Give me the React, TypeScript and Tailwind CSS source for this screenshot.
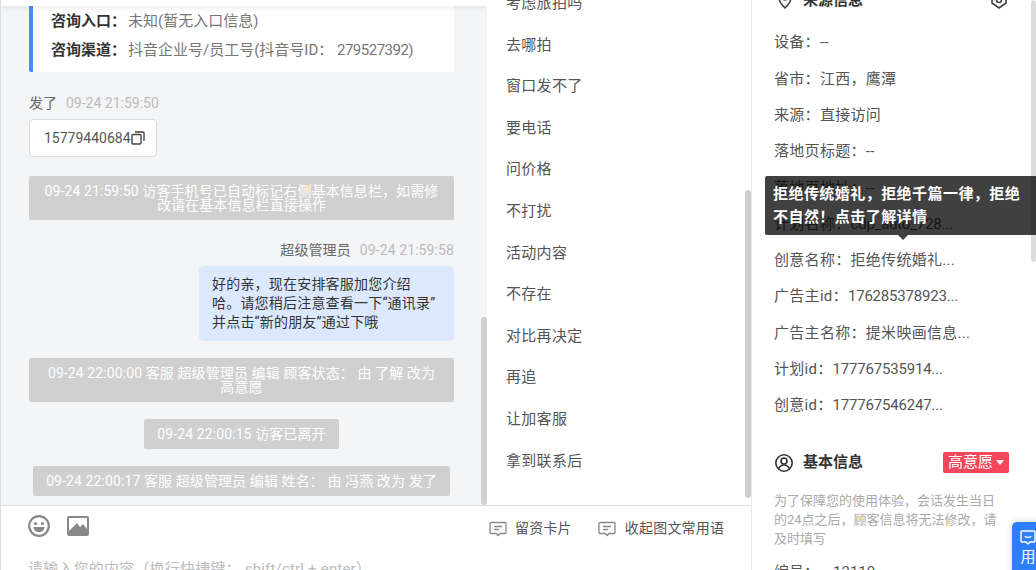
const font = { fontFamily: 'Roboto, "Noto Sans CJK SC", sans-serif' }

const phrases = ['考虑旅拍吗', '去哪拍', '窗口发不了', '要电话', '问价格', '不打扰', '活动内容', '不存在', '对比再决定', '再追', '让加客服', '拿到联系后']

const sourceRows = [
  { label: '设备：', value: '--' },
  { label: '省市：', value: '江西，鹰潭' },
  { label: '来源：', value: '直接访问' },
  { label: '落地页标题：', value: '--' },
  { label: '落地页地址：', value: '--' },
  { label: '计划名称：', value: 'cdp_auto_728...', latin: true },
  { label: '创意名称：', value: '拒绝传统婚礼...' },
  { label: '广告主id：', value: '176285378923...', latin: true },
  { label: '广告主名称：', value: '提米映画信息...' },
  { label: '计划id：', value: '177767535914...', latin: true },
  { label: '创意id：', value: '177767546247...', latin: true },
]

function MessageIcon() {
  return (
    <svg width="18" height="16" viewBox="0 0 18 16" fill="none" stroke="#888" strokeWidth="1.3" className="shrink-0">
      <path d="M2 1.500h14a1 1 0 0 1 1 1v9a1 1 0 0 1-1 1h-5l-2 2-2-2H2a1 1 0 0 1-1-1v-9a1 1 0 0 1 1-1z" />
      <path d="M5 5.500h8M5 8.500h5" />
    </svg>
  )
}

function SysNote({ children, full = true }: { children: React.ReactNode; full?: boolean }) {
  return (
    <div className={`${full ? 'w-full px-[13px]' : 'px-[13px]'} mx-auto bg-[#d0d0d0] rounded-[2px] text-white text-center text-[14px] tracking-[0.1px] leading-[14px] py-[8px]`}>
      {children}
    </div>
  )
}

export default function App() {
  return (
    <div className="w-[1036px] h-[570px] overflow-hidden flex bg-white" style={font}>
      {/* chat */}
      <div className="w-[487px] h-full flex flex-col border-l border-[#ddd] shrink-0">
        <div className="h-[505px] bg-[#f4f5f7] relative overflow-hidden flex flex-col shrink-0">
          <div className="h-[6px] bg-white shadow-[0_2px_6px_rgba(0,0,0,0.08)] shrink-0 z-10" />
          <div className="ml-[28px] w-[425px] flex flex-col">
            <div className="h-[66px] bg-white border-l-4 border-[#4d8af0] rounded-bl-[2px] pl-[18px] pt-[1px] text-[15px] text-[#777]">
              <div className="h-[29px] leading-[29px]"><b className="text-[#333] font-bold mr-[2px]">咨询入口：</b>未知(暂无入口信息)</div>
              <div className="h-[29px] leading-[29px]"><b className="text-[#333] font-bold mr-[2px]">咨询渠道：</b>抖音企业号/员工号(抖音号ID： <span className="tracking-[-0.5px]">279527392)</span></div>
            </div>
            <div className="mt-[21px] text-[14px] leading-[20px] text-[#666]">发了<span className="ml-[9px] text-[#bbb]">09-24 21:59:50</span></div>
            <div className="mt-[6px] w-[128px] h-[38px] bg-white border border-[#ddd] rounded-[4px] flex items-center pl-[14px] text-[14px] text-[#555]">
              15779440684
              <svg width="14" height="14" viewBox="0 0 14 14" fill="none" stroke="#444" strokeWidth="1.4" className="shrink-0"><rect x="1" y="3.500" width="9" height="9.500" rx="1" /><path d="M4 1h8a1 1 0 0 1 1 1v8" /></svg>
            </div>
            <div className="mt-[19px]"><SysNote>09-24 21:59:50 访客手机号已自动标记右侧基本信息栏，如需修改请在基本信息栏直接操作</SysNote></div>
            <div className="mt-[20px] text-right text-[14px] leading-[20px] tracking-[0.1px] text-[#666]">超级管理员<span className="ml-[9px] text-[#bbb]">09-24 21:59:58</span></div>
            <div className="mt-[6px] ml-auto w-[255px] h-[75px] bg-[#dce8fd] rounded-[5px] pl-[13px] py-[9px] text-[14px] leading-[19px] tracking-[0.2px] text-[#333] whitespace-nowrap">
              好的亲，现在安排客服加您介绍<br />哈。请您稍后注意查看一下“通讯录”<br />并点击“新的朋友”通过下哦
            </div>
            <div className="mt-[17px]"><SysNote>09-24 22:00:00 客服 超级管理员 编辑 顾客状态： 由 了解 改为 高意愿</SysNote></div>
            <div className="mt-[17px] flex"><SysNote full={false}>09-24 22:00:15 访客已离开</SysNote></div>
            <div className="mt-[17px] flex"><SysNote full={false}>09-24 22:00:17 客服 超级管理员 编辑 姓名： 由 冯燕 改为 发了</SysNote></div>
          </div>
          <div className="absolute right-0 top-[317px] bottom-0 w-[6px] rounded-[3px] bg-[#d0d0d0]" />
        </div>
        <div className="flex-1 border-t border-[#ddd] pl-[27px] bg-white overflow-hidden">
          <div className="flex items-center gap-[17px] h-[40px]">
            <svg width="22" height="22" viewBox="0 0 22 22" fill="none">
              <circle cx="11" cy="11" r="9.800" stroke="#888" strokeWidth="2.200" />
              <circle cx="7.500" cy="8.500" r="1.600" fill="#888" />
              <circle cx="14.500" cy="8.500" r="1.600" fill="#888" />
              <path d="M5.500 12h11c0 3-2.500 5-5.500 5s-5.500-2-5.500-5z" fill="#888" />
            </svg>
            <svg width="22" height="20" viewBox="0 0 22 20">
              <rect width="22" height="20" rx="2" fill="#888" />
              <path d="M2 2h18v11l-4-5-3 3-3-4-8 8z" fill="#fff" />
            </svg>
          </div>
          <div className="mt-[13px] text-[15px] text-[#bbb] leading-[20px] tracking-[0.2px] whitespace-nowrap">请输入您的内容（换行快捷键： shift/ctrl + enter）</div>
        </div>
      </div>

      {/* common phrases */}
      <div className="w-[265px] h-full flex flex-col border-r border-[#e8e8e8] shrink-0">
        <div className="h-[505px] relative overflow-hidden pl-[19px] shrink-0">
          <div className="-mt-[17px]">
            {phrases.map((p) => (
              <div key={p} className="h-[41.6px] leading-[41.6px] text-[15px] tracking-[0.3px] text-[#555]">{p}</div>
            ))}
          </div>
          <div className="absolute right-0 top-[190px] h-[308px] w-[6px] rounded-[3px] bg-[#d0d0d0]" />
        </div>
        <div className="border-t border-[#ddd] flex-1">
          <div className="flex items-center h-[45px] text-[14px] tracking-[0.2px] text-[#555] pl-[2px]">
            <MessageIcon />
            <span className="ml-[8px]">留资卡片</span>
            <span className="ml-[26px]"><MessageIcon /></span>
            <span className="ml-[9px]">收起图文常用语</span>
          </div>
        </div>
      </div>

      {/* right side info */}
      <div className="flex-1 h-full relative overflow-hidden">
        <div className="-mt-[11px] pl-[22px] pr-[27px]">
          <div className="h-[22px] flex items-center text-[15px] font-bold text-[#333]">
            <svg width="16" height="18" viewBox="0 0 16 18" fill="none" stroke="#444" strokeWidth="1.6" className="ml-[3px] mr-[10px]"><path d="M8 17C4 13 2 10 2 7a6 6 0 0 1 12 0c0 3-2 6-6 10z" /><circle cx="8" cy="7" r="2" /></svg>
            来源信息
            <svg width="18" height="20" viewBox="0 0 18 20" fill="none" stroke="#444" strokeWidth="1.6" className="ml-auto mr-[1px]"><path d="M9 1l7 4v8l-7 5-7-5V5z" /><circle cx="9" cy="10" r="2.500" /></svg>
          </div>
          <div className="mt-[13.4px]">
            {sourceRows.map((r) => (
              <div key={r.label} className="h-[36.3px] leading-[36.3px] text-[15px] tracking-[0.3px] text-[#555] whitespace-nowrap">
                {r.label}
                <span className={r.latin ? 'tracking-[-0.2px]' : ''}>{r.value}</span>
              </div>
            ))}
          </div>
          <div className="mt-[28px] flex items-center h-[22px] text-[15px] font-bold text-[#333]">
            <svg width="20" height="20" viewBox="0 0 20 20" fill="none" stroke="#333" strokeWidth="1.600" className="mr-[9px]"><circle cx="10" cy="10" r="8.200" /><circle cx="10" cy="8" r="3" /><path d="M4.500 16c1-3 3-4 5.500-4s4.500 1 5.500 4" /></svg>
            基本信息
            <div className="ml-auto w-[66px] h-[21px] bg-[#f5475a] rounded-[2px] text-white font-normal flex items-center justify-center gap-[3px]">
              高意愿
              <span className="w-0 h-0 border-x-[4px] border-x-transparent border-t-[5px] border-t-white" />
            </div>
          </div>
          <div className="mt-[17px] w-[230px] text-[13px] leading-[19px] text-[#aaa]">为了保障您的使用体验，会话发生当日的24点之后，顾客信息将无法修改，请及时填写</div>
          <div className="mt-[14px] text-[15px] leading-[20px] text-[#555]">编号：<span className="ml-[14px]">13110</span></div>
        </div>
        <div className="absolute right-0 top-0 h-[262px] w-[5px] rounded-[3px] bg-[#ddd]" />

        {/* tooltip */}
        <div className="absolute left-[13px] top-[176px] w-[272px] h-[59px] bg-black/75 rounded-[2px] pl-[8px] pr-[10px] py-[7px] text-[15px] leading-[23px] tracking-[0.45px] font-bold text-white">
          拒绝传统婚礼，拒绝千篇一律，拒绝不自然！点击了解详情
          <span className="absolute left-[133px] -bottom-[5px] w-0 h-0 border-x-[5px] border-x-transparent border-t-[5px] border-t-[#404040]" />
        </div>

        {/* float button */}
        <div className="absolute -right-[8px] top-[522px] w-[32px] h-[60px] bg-[#2d7ff9] rounded-l-[5px] flex flex-col items-center pt-[8px] text-white text-[15px] shadow-[0_0_6px_rgba(0,0,0,0.2)]">
          <svg width="16" height="15" viewBox="0 0 16 15" fill="none" stroke="#fff" strokeWidth="1.400"><path d="M2 1h12a1 1 0 0 1 1 1v9a1 1 0 0 1-1 1h-4l-2 2-2-2H2a1 1 0 0 1-1-1V2a1 1 0 0 1 1-1z" /><path d="M5 6c1 2 5 2 6 0" /></svg>
          <span className="mt-[2px] leading-[20px]">用</span>
        </div>
      </div>
    </div>
  )
}
